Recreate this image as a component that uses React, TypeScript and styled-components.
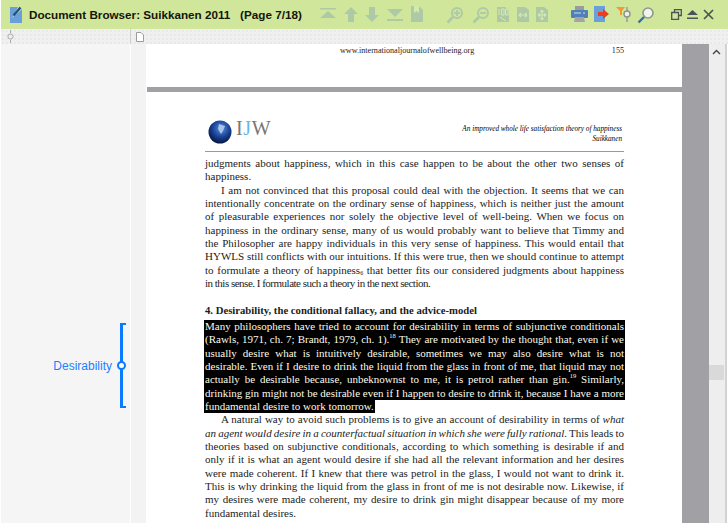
import { FC, ReactNode } from "react";
import styled, { createGlobalStyle } from "styled-components";

const Global = createGlobalStyle`
    html, body {
        margin: 0;
        padding: 0;
        background: #fff;
    }
`;

const faded = "#aec9a6";

const Window = styled.div`
    width: 728px;
    height: 523px;
    overflow: hidden;
    display: flex;
    flex-direction: column;
    padding-left: 1px;
    box-sizing: border-box;
    background: #fff;
`;

const TitleBar = styled.div`
    height: 29px;
    flex: none;
    display: flex;
    align-items: center;
    background: #d0e79b;
    padding-left: 9px;
`;

const Title = styled.div`
    margin-left: 7px;
    width: 290px;
    flex: none;
    font: bold 11.7px "Liberation Sans", Arial, sans-serif;
    color: #15150c;
    white-space: pre;
`;

const Group = styled.div<{ $width: number; $gap?: number }>`
    display: flex;
    align-items: center;
    justify-content: space-between;
    flex: none;
    width: ${(p) => p.$width}px;
    margin-left: ${(p) => p.$gap ?? 0}px;
`;

const SubBar = styled.div`
    height: 15px;
    flex: none;
    display: flex;
    background-color: #f0f0f0;
    background-image: radial-gradient(#e8e8e8 0.7px, transparent 0.8px);
    background-size: 4px 4px;
`;

const SubCell = styled.div<{ $width?: number }>`
    display: flex;
    align-items: center;
    width: ${(p) => (p.$width ? `${p.$width}px` : "auto")};
    flex: ${(p) => (p.$width ? "none" : 1)};
    padding-left: ${(p) => (p.$width ? 6 : 5)}px;
    box-sizing: border-box;
    border-right: ${(p) => (p.$width ? "1px solid #cfcfcf" : "none")};
`;

const Body = styled.div`
    flex: 1;
    min-height: 0;
    display: flex;
`;

const Side = styled.div`
    width: 129px;
    flex: none;
    background: #f5f5f5;
    padding-top: 279px;
    box-sizing: border-box;
    margin-right: 1px;
`;

const Annotation = styled.div`
    display: flex;
    align-items: center;
    justify-content: flex-end;
    height: 85px;
    padding-right: 4px;
`;

const Label = styled.div`
    font: 12px "Liberation Sans", Arial, sans-serif;
    color: #1d7fff;
    margin-right: 8px;
`;

const Bracket = styled.div`
    position: relative;
    width: 3px;
    height: 81px;
    border: solid #0a7bff;
    border-width: 2px 0 2px 3px;
`;

const Knob = styled.div`
    position: absolute;
    left: -6px;
    top: 36px;
    width: 5px;
    height: 5px;
    border: 2px solid #0a7bff;
    border-radius: 50%;
    background: #fff;
`;

const Strip = styled.div`
    width: 15px;
    flex: none;
    background: #f3f3f3;
`;

const Doc = styled.div`
    width: 536px;
    flex: none;
    display: flex;
    flex-direction: column;
    overflow: hidden;
    background: #fff;
    font-family: "Liberation Serif", "Times New Roman", serif;
    color: #1c1c1c;
`;

const PageFoot = styled.div`
    height: 42px;
    flex: none;
    display: flex;
    justify-content: space-between;
    padding: 1px 58px 0 194px;
    font-size: 8.1px;
    line-height: 12px;
`;

const PageGap = styled.div`
    height: 5px;
    flex: none;
    margin-left: 1px;
    background: #a1a0a5;
`;

const Page = styled.div`
    padding: 27px 58px 0 59px;
`;

const RunningHead = styled.div`
    height: 32px;
    display: flex;
    justify-content: space-between;
    align-items: flex-start;
    border-bottom: 1px solid #999;
    box-sizing: content-box;
`;

const Logo = styled.div`
    display: flex;
    align-items: flex-start;
    gap: 4px;
    margin: 1px 0 0 3px;
`;

const LogoText = styled.div`
    font-size: 20px;
    line-height: 17px;
    letter-spacing: 0.6px;
    color: #777;
    span {
        color: #62bbe9;
    }
`;

const Running = styled.div`
    font-size: 7.2px;
    line-height: 9.5px;
    font-style: italic;
    text-align: right;
    color: #000;
    padding: 6px 2px 0 0;
`;

const Lines = styled.div<{ $top?: number }>`
    margin-top: ${(p) => p.$top ?? 0}px;
`;

const Line = styled.div<{ $indent?: boolean; $end?: boolean; $squeeze?: boolean }>`
    height: 13.32px;
    line-height: 13.32px;
    font-size: 11px;
    white-space: nowrap;
    text-align: justify;
    text-align-last: ${(p) => (p.$end ? "left" : "justify")};
    text-indent: ${(p) => (p.$indent ? "16px" : "0")};
    word-spacing: ${(p) => (p.$end ? "0" : "-0.6px")};
    letter-spacing: ${(p) => (p.$squeeze ? "-0.5px" : "0")};
    sup {
        font-size: 6.5px;
        line-height: 0;
    }
    sub {
        font-size: 6px;
        line-height: 0;
        vertical-align: -1px;
    }
`;

const Heading = styled.div`
    margin-top: 13px;
    height: 14px;
    line-height: 14px;
    font-size: 10.7px;
    font-weight: bold;
`;

const Marked = styled.div`
    margin: 3px -1px 0;
    color: #fdfbe9;
`;

const MarkedLine = styled(Line)`
    background: #000;
    padding: 0 1px;
    width: ${(p) => (p.$end ? "fit-content" : "auto")};
`;

const Gutter = styled.div`
    width: 27px;
    flex: none;
    background: #a1a0a5;
`;

const ScrollTrack = styled.div`
    width: 16px;
    flex: none;
    background: #eeeeee;
    padding-top: 5px;
    box-sizing: border-box;
`;

const Thumb = styled.div`
    margin-top: 310px;
    width: 15px;
    height: 15px;
    background: #d9d9d9;
`;

const Edge = styled.div`
    width: 2px;
    flex: none;
    background: #d2d2d2;
`;

const Icon: FC<{ w?: number; h?: number; children: ReactNode }> = ({ w = 18, h = 18, children }) => (
    <svg width={w} height={h} viewBox={`0 0 ${w} ${h}`} style={{ display: "block", flex: "none" }}>
        {children}
    </svg>
);

const Magnifier: FC<{ sign: "plus" | "minus" }> = ({ sign }) => (
    <Icon>
        <circle cx="11" cy="7" r="5" fill="none" stroke={faded} strokeWidth="2" />
        <path d="M7 11 L1.5 16.5" stroke={faded} strokeWidth="2.6" />
        <path d="M8 7 H14" stroke={faded} strokeWidth="1.8" />
        {sign === "plus" && <path d="M11 4 V10" stroke={faded} strokeWidth="1.8" />}
    </Icon>
);

const Sheet: FC<{ children?: ReactNode }> = ({ children }) => (
    <Icon w={12} h={17}>
        <path d="M0 1 H8 L12 4 V16 H0 Z" fill={faded} />
        {children}
    </Icon>
);

const para2 = [
    "intentionally concentrate on the ordinary sense of happiness, which is neither just the amount",
    "of pleasurable experiences nor solely the objective level of well-being. When we focus on",
    "happiness in the ordinary sense, many of us would probably want to believe that Timmy and",
    "the Philosopher are happy individuals in this very sense of happiness. This would entail that",
    "HYWLS still conflicts with our intuitions. If this were true, then we should continue to attempt",
];
const para3 = [
    "theories based on subjunctive conditionals, according to which something is desirable if and",
    "only if it is what an agent would desire if she had all the relevant information and her desires",
    "were made coherent. If I knew that there was petrol in the glass, I would not want to drink it.",
    "This is why drinking the liquid from the glass in front of me is not desirable now. Likewise, if",
    "my desires were made coherent, my desire to drink gin might disappear because of my more",
];

export default function App() {
    return (
        <Window>
            <Global />
            <TitleBar>
                <Icon w={12} h={17}>
                    <path d="M0 1 H8 L2 12 L9 6 L12 3 V17 H0 Z" fill="#6a9fd9" />
                    <path d="M3.5 9.5 L10.5 1.5" stroke="#1f4f86" strokeWidth="2.4" />
                </Icon>
                <Title>{"Document Browser: Suikkanen 2011   (Page 7/18)"}</Title>
                <Group $width={104}>
                    <Icon>
                        <path d="M1 2 H17 V3.5 H1 Z M9 5 L17 12 H1 Z" fill={faded} />
                    </Icon>
                    <Icon w={14}>
                        <path d="M7 1 L14 8 H10 V16 H4 V8 H0 Z" fill={faded} />
                    </Icon>
                    <Icon w={14}>
                        <path d="M4 1 H10 V9 H14 L7 16 L0 9 H4 Z" fill={faded} />
                    </Icon>
                    <Icon>
                        <path d="M1 3 H17 L9 11 Z M1 13 H17 V15 H1 Z" fill={faded} />
                    </Icon>
                    <Icon w={12}>
                        <path d="M0 0 H8 L12 4 V16 H0 Z" fill={faded} />
                        <path d="M3 0 H8 V7 L5.5 5 L3 7 Z" fill="#d6e9ad" />
                    </Icon>
                </Group>
                <Group $width={102} $gap={23}>
                    <Magnifier sign="plus" />
                    <Magnifier sign="minus" />
                    <Sheet>
                        <path d="M2 3 V9 M4.5 3 H7 V9 H4.5 Z M8.5 3 H11 V9 H8.5 Z M3 11 L9 15" stroke="#d6e9ad" strokeWidth="1" fill="none" />
                    </Sheet>
                    <Sheet>
                        <path d="M2 9 H10 M2 9 L4 7 M2 9 L4 11 M10 9 L8 7 M10 9 L8 11" stroke="#d6e9ad" strokeWidth="1.2" fill="none" />
                    </Sheet>
                    <Sheet>
                        <path d="M6 4 V14 M2 9 H10 M6 4 L4.5 6 M6 4 L7.5 6 M6 14 L4.5 12 M6 14 L7.5 12 M2 9 L4 7.5 M2 9 L4 10.5 M10 9 L8 7.5 M10 9 L8 10.5" stroke="#d6e9ad" strokeWidth="1.2" fill="none" />
                    </Sheet>
                </Group>
                <Group $width={84} $gap={23}>
                    <Icon w={17} h={17}>
                        <rect x="4" y="0" width="9" height="5" fill="#9b9b9b" />
                        <rect x="0" y="4" width="17" height="8" rx="1" fill="#4f81b8" />
                        <path d="M3 7 H10 M12 7 H14" stroke="#cfe0ee" strokeWidth="1" />
                        <path d="M4 11 H13 L14 16 H3 Z" fill="#a4a4a4" />
                    </Icon>
                    <Icon w={15} h={17}>
                        <rect x="0" y="0" width="11" height="16" fill="#6a9fd9" />
                        <path d="M4 6 H9 V3 L15 8 L9 13 V10 H4 Z" fill="#e8401c" />
                    </Icon>
                    <Icon w={15} h={17}>
                        <path d="M0 1 H9 L6 5 V9 H4 V5 Z" fill="#f29a2e" />
                        <path d="M11 1 V16" stroke="#9aa39a" strokeWidth="1.6" />
                        <circle cx="11" cy="8" r="3" fill="#eef0e6" stroke="#8b938b" strokeWidth="1.4" />
                    </Icon>
                    <Icon>
                        <circle cx="11" cy="7" r="5" fill="#f0f4ea" stroke="#8d9890" strokeWidth="1.6" />
                        <path d="M7 11 L1.5 16.5" stroke="#2f6fb2" strokeWidth="2.4" />
                    </Icon>
                </Group>
                <Group $width={43} $gap={16}>
                    <Icon w={11} h={11}>
                        <path d="M3.5 3 V0.7 H10.3 V6.5 H8 M0.7 3.5 H7.5 V10.3 H0.7 Z" fill="none" stroke="#4d5356" strokeWidth="1.3" />
                    </Icon>
                    <Icon w={11} h={11}>
                        <path d="M5.5 1 L11 6 H0 Z M0 8.5 H11 V10 H0 Z" fill="#4d5356" />
                    </Icon>
                    <Icon w={11} h={11}>
                        <path d="M1 1 L10 10 M10 1 L1 10" stroke="#4d5356" strokeWidth="1.7" />
                    </Icon>
                </Group>
            </TitleBar>
            <SubBar>
                <SubCell $width={130}>
                    <Icon w={7} h={13}>
                        <path d="M3.5 0 V3 M3.5 10 V13" stroke="#a9a9a9" strokeWidth="1" />
                        <circle cx="3.5" cy="6.5" r="2.6" fill="none" stroke="#a9a9a9" strokeWidth="1" />
                    </Icon>
                </SubCell>
                <SubCell>
                    <Icon w={8} h={10}>
                        <path d="M0.5 0.5 H5 L7.5 3 V9.5 H0.5 Z" fill="#fff" stroke="#9c9c9c" strokeWidth="1" />
                    </Icon>
                </SubCell>
            </SubBar>
            <Body>
                <Side>
                    <Annotation>
                        <Label>Desirability</Label>
                        <Bracket>
                            <Knob />
                        </Bracket>
                    </Annotation>
                </Side>
                <Strip />
                <Doc>
                    <PageFoot>
                        <span>www.internationaljournalofwellbeing.org</span>
                        <span>155</span>
                    </PageFoot>
                    <PageGap />
                    <Page>
                        <RunningHead>
                            <Logo>
                                <svg width="24" height="24" viewBox="0 0 24 24" style={{ display: "block" }}>
                                    <defs>
                                        <radialGradient id="globe" cx="0.55" cy="0.35" r="0.7">
                                            <stop offset="0" stopColor="#5b8fd6" />
                                            <stop offset="0.55" stopColor="#173f94" />
                                            <stop offset="1" stopColor="#050f33" />
                                        </radialGradient>
                                    </defs>
                                    <circle cx="12" cy="12" r="11.5" fill="url(#globe)" />
                                    <path d="M11 4 L17 6 L15 11 L13 14 L10 9 Z" fill="#a9c4ea" />
                                </svg>
                                <LogoText>
                                    I<span>J</span>W
                                </LogoText>
                            </Logo>
                            <Running>
                                An improved whole life satisfaction theory of happiness
                                <br />
                                Suikkanen
                            </Running>
                        </RunningHead>
                        <Lines $top={5}>
                            <Line>judgments about happiness, which in this case happen to be about the other two senses of</Line>
                            <Line $end>happiness.</Line>
                            <Line $indent>I am not convinced that this proposal could deal with the objection. It seems that we can</Line>
                            {para2.map((t) => (
                                <Line key={t}>{t}</Line>
                            ))}
                            <Line>
                                to formulate a theory of happiness<sub>6</sub> that better fits our considered judgments about happiness
                            </Line>
                            <Line $end $squeeze>in this sense. I formulate such a theory in the next section.</Line>
                        </Lines>
                        <Heading>4. Desirability, the conditional fallacy, and the advice-model</Heading>
                        <Marked>
                            <MarkedLine>Many philosophers have tried to account for desirability in terms of subjunctive conditionals</MarkedLine>
                            <MarkedLine>
                                (Rawls, 1971, ch. 7; Brandt, 1979, ch. 1).<sup>18</sup> They are motivated by the thought that, even if we
                            </MarkedLine>
                            <MarkedLine>usually desire what is intuitively desirable, sometimes we may also desire what is not</MarkedLine>
                            <MarkedLine>desirable. Even if I desire to drink the liquid from the glass in front of me, that liquid may not</MarkedLine>
                            <MarkedLine>
                                actually be desirable because, unbeknownst to me, it is petrol rather than gin.<sup>19</sup> Similarly,
                            </MarkedLine>
                            <MarkedLine>drinking gin might not be desirable even if I happen to desire to drink it, because I have a more</MarkedLine>
                            <MarkedLine $end>fundamental desire to work tomorrow.</MarkedLine>
                        </Marked>
                        <Lines>
                            <Line $indent>
                                A natural way to avoid such problems is to give an account of desirability in terms of <em>what</em>
                            </Line>
                            <Line>
                                <em>an agent would desire in a counterfactual situation in which she were fully rational</em>. This leads to
                            </Line>
                            {para3.map((t) => (
                                <Line key={t}>{t}</Line>
                            ))}
                            <Line $end>fundamental desires.</Line>
                        </Lines>
                    </Page>
                </Doc>
                <Gutter />
                <ScrollTrack>
                    <Icon w={15} h={6}>
                        <path d="M4 5 L7.5 1.5 L11 5" fill="none" stroke="#444" strokeWidth="1.4" />
                    </Icon>
                    <Thumb />
                </ScrollTrack>
                <Edge />
            </Body>
        </Window>
    );
}
